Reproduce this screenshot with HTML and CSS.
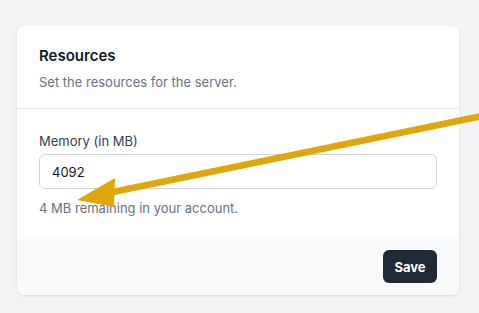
FILE: index.html
```html
<!DOCTYPE html>
<html>
<head>
<meta charset="utf-8">
<link rel="stylesheet" href="styles.css">
</head>
<body>
<div class="page">
  <div class="card">
    <div class="card-header">
      <h2 class="title">Resources</h2>
      <p class="subtitle">Set the resources for the server.</p>
    </div>
    <div class="card-body">
      <label class="label" for="mem">Memory (in MB)</label>
      <input class="input" id="mem" type="text" value="4092">
      <p class="help">4 MB remaining in your account.</p>
    </div>
    <div class="card-footer">
      <button class="btn">Save</button>
    </div>
  </div>
</div>
<svg class="arrow" width="479" height="313" viewBox="0 0 479 313">
  <line x1="482" y1="116" x2="108" y2="193" stroke="#e0a70b" stroke-width="6.5"/>
  <polygon points="77,200 115,178 114,207" fill="#e0a70b"/>
</svg>
</body>
</html>
```
FILE: styles.css
```css
* { box-sizing: border-box; }
html, body { margin: 0; padding: 0; }
body {
  background: #f3f4f6;
  font-family: Inter, "Noto Sans", sans-serif;
  width: 479px;
  height: 313px;
  overflow: hidden;
  position: relative;
}
.page {
  padding: 26px 20px 0 17px;
}
.card {
  width: 442px;
  background: #fff;
  border-radius: 8px;
  box-shadow: 0 1px 3px rgba(0,0,0,0.08), 0 1px 2px rgba(0,0,0,0.04);
  overflow: hidden;
}
.card-header {
  padding: 19px 22px 16px;
  border-bottom: 1px solid #e5e7eb;
}
.title {
  margin: 0;
  font-size: 15px;
  font-weight: 600;
  color: #111827;
  line-height: 22px;
}
.subtitle {
  margin: 5px 0 0;
  font-size: 13px;
  color: #6b7280;
  line-height: 20px;
}
.card-body {
  padding: 22px 22px 21px;
  display: flex;
  flex-direction: column;
}
.label {
  font-size: 13px;
  color: #374151;
  line-height: 20px;
  font-weight: 400;
}
.input {
  margin-top: 3px;
  height: 35px;
  width: 398px;
  border: 1px solid #d1d5db;
  border-radius: 6px;
  padding: 0 12px;
  font-family: inherit;
  font-size: 13px;
  color: #111827;
  outline: none;
}
.help {
  margin: 9px 0 0;
  font-size: 13px;
  color: #6b7280;
  line-height: 20px;
}
.card-footer {
  background: #f9fafb;
  padding: 11px 22px 12px;
  display: flex;
  justify-content: flex-end;
}
.btn {
  width: 54px;
  height: 33px;
  background: #1f2937;
  color: #fff;
  border: none;
  border-radius: 6px;
  font-family: inherit;
  font-size: 13px;
  font-weight: 700;
}
.arrow {
  position: absolute;
  left: 0;
  top: 0;
  pointer-events: none;
}
```
